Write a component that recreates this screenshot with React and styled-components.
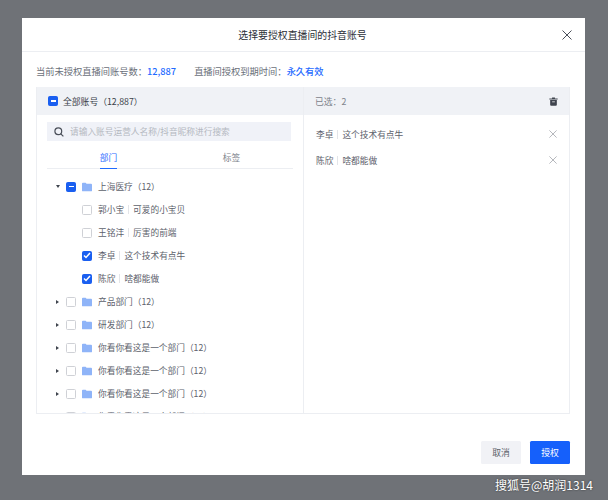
import styled, { createGlobalStyle } from "styled-components"

const FONT = `"Noto Sans CJK SC", "Inter", "Liberation Sans", sans-serif`

const departments = ["产品部门", "研发部门", "你看你看这是一个部门", "你看你看这是一个部门", "你看你看这是一个部门", "你看你看这是一个部门"]

function Folder() {
    return (
        <svg width="10" height="10" viewBox="0 0 11 10">
            <path d="M0 1.2C0 .6.4.2 1 .2h3l1 1.3h5c.6 0 1 .4 1 1V9c0 .5-.4.8-1 .8H1c-.6 0-1-.3-1-.8z" fill="#8fb4f8" />
        </svg>
    )
}

function Close({ size, color }) {
    return (
        <svg width={size} height={size} viewBox="0 0 10 10">
            <path d="M.5.5l9 9M9.5.5l-9 9" stroke={color} strokeWidth="1" fill="none" />
        </svg>
    )
}

function Check({ state }) {
    return (
        <CheckBox $on={state !== "off"}>
            {state === "half" && <Dash />}
            {state === "on" && (
                <svg width="8" height="7" viewBox="0 0 8 7">
                    <path d="M1 3.5l2 2 4-4.5" stroke="#fff" strokeWidth="1.5" fill="none" />
                </svg>
            )}
        </CheckBox>
    )
}

function Person({ name, nick, state }) {
    return (
        <PersonRow>
            <Check state={state} />
            <Name>{name}<Sep />{nick}</Name>
        </PersonRow>
    )
}

function Department({ name, open, state }) {
    return (
        <DeptRow>
            <Arrow $open={open} />
            <Check state={state} />
            <Folder />
            <Name>{name}（12）</Name>
        </DeptRow>
    )
}

export default function App() {
    return (
        <Page>
            <GlobalStyle />
            <Modal>
                <Header>
                    <Title>选择要授权直播间的抖音账号</Title>
                    <HeaderClose><Close size={10} color="#4a4f59" /></HeaderClose>
                </Header>
                <Body>
                    <Info>
                        <span>当前未授权直播间账号数：<Blue>12,887</Blue></span>
                        <span>直播间授权到期时间：<Blue>永久有效</Blue></span>
                    </Info>
                    <Panel>
                        <LeftColumn>
                            <PanelHead>
                                <Check state="half" />
                                <AllLabel>全部账号（12,887）</AllLabel>
                            </PanelHead>
                            <LeftBody>
                                <Search>
                                    <svg width="10" height="10" viewBox="0 0 10 10">
                                        <circle cx="4.3" cy="4.3" r="3.4" stroke="#4a4f59" strokeWidth="1.2" fill="none" />
                                        <path d="M6.8 6.8L9.4 9.4" stroke="#4a4f59" strokeWidth="1.2" />
                                    </svg>
                                    <span>请输入账号运营人名称/抖音昵称进行搜索</span>
                                </Search>
                                <Tabs>
                                    <Tab $active>部门</Tab>
                                    <Tab>标签</Tab>
                                </Tabs>
                                <Tree>
                                    <Department name="上海医疗" open state="half" />
                                    <Person name="郭小宝" nick="可爱的小宝贝" state="off" />
                                    <Person name="王铭沣" nick="厉害的前端" state="off" />
                                    <Person name="李卓" nick="这个技术有点牛" state="on" />
                                    <Person name="陈欣" nick="啥都能做" state="on" />
                                    {departments.map((name, i) => (
                                        <Department key={i} name={name} state="off" />
                                    ))}
                                </Tree>
                            </LeftBody>
                        </LeftColumn>
                        <RightColumn>
                            <PanelHead $split>
                                <Muted>已选：2</Muted>
                                <svg width="9" height="9" viewBox="0 0 10 10">
                                    <path d="M3.4 1.6V.6h3.2v1h3v1.1H.4V1.600zM1.300 3.400h7.400v5.200c0 .6-.4 1-1 1H2.300c-.6 0-1-.4-1-1z" fill="#3f444e" />
                                    <path d="M3.500 5h3v.8h-3z" fill="#fff" />
                                </svg>
                            </PanelHead>
                            <Selected>
                                <SelectedRow>
                                    <Name>李卓<Sep />这个技术有点牛</Name>
                                    <Close size={8} color="#a3a6ac" />
                                </SelectedRow>
                                <SelectedRow>
                                    <Name>陈欣<Sep />啥都能做</Name>
                                    <Close size={8} color="#a3a6ac" />
                                </SelectedRow>
                            </Selected>
                        </RightColumn>
                    </Panel>
                </Body>
                <Footer>
                    <Button>取消</Button>
                    <Button $primary>授权</Button>
                </Footer>
            </Modal>
            <Watermark>搜狐号@胡润1314</Watermark>
        </Page>
    )
}

const GlobalStyle = createGlobalStyle`
    * {
        box-sizing: border-box;
    }
    body {
        margin: 0;
        background: #6f7277;
        font-family: ${FONT};
    }
`
const Page = styled.div`
    position: relative;
    width: 608px;
    height: 500px;
    padding: 18px 23px 25px 22px;
    background: #6f7277;
    overflow: hidden;
`
const Modal = styled.div`
    display: flex;
    flex-direction: column;
    height: 457px;
    background: #ffffff;
`
const Header = styled.div`
    display: flex;
    align-items: center;
    justify-content: center;
    position: relative;
    height: 34px;
    flex: none;
    padding-right: 2px;
    border-bottom: 1px solid #eceef2;
`
const Title = styled.div`
    font-size: 9.900px;
    color: #2b2f38;
`
const HeaderClose = styled.div`
    position: absolute;
    right: 13px;
    top: 12px;
    display: flex;
`
const Body = styled.div`
    display: flex;
    flex-direction: column;
    flex: none;
    padding: 0 15px 0 14px;
`
const Info = styled.div`
    display: flex;
    align-items: center;
    gap: 18px;
    height: 35px;
    padding-top: 3px;
    font-size: 9.250px;
    color: #6b7079;
`
const Blue = styled.span`
    color: #1f6bff;
    font-weight: 500;
`
const Panel = styled.div`
    display: flex;
    height: 327px;
    border: 1px solid #eceef2;
    border-top: none;
    overflow: hidden;
`
const LeftColumn = styled.div`
    width: 267px;
    flex: none;
    border-right: 1px solid #eceef2;
`
const RightColumn = styled.div`
    flex: 1;
`
const PanelHead = styled.div`
    display: flex;
    align-items: center;
    justify-content: ${(p) => (p.$split ? "space-between" : "flex-start")};
    gap: 5px;
    height: 28px;
    padding: 0 11px 0 11px;
    background: #f0f2f6;
`
const AllLabel = styled.span`
    font-size: 8.800px;
    color: #3a3f49;
`
const Muted = styled.span`
    font-size: 8.800px;
    color: #7d828b;
`
const LeftBody = styled.div`
    padding: 7px 10px 0;
`
const Search = styled.div`
    display: flex;
    align-items: center;
    gap: 6px;
    height: 19px;
    margin-right: 2px;
    padding: 0 6px 0 7px;
    background: #f0f2f8;
    font-size: 8.700px;
    color: #b4b8c0;
`
const Tabs = styled.div`
    display: grid;
    grid-template-columns: 1fr 1fr;
    height: 28px;
    border-bottom: 1px solid #eceef2;
`
const Tab = styled.div`
    justify-self: center;
    height: 28px;
    padding-top: 10px;
    font-size: 8.700px;
    color: ${(p) => (p.$active ? "#1f6bff" : "#7d828b")};
    border-bottom: 1px solid ${(p) => (p.$active ? "#1f6bff" : "transparent")};
`
const Tree = styled.div`
    display: flex;
    flex-direction: column;
    padding-top: 6px;
`
const DeptRow = styled.div`
    display: flex;
    align-items: center;
    height: 23px;
    flex: none;
    padding-left: 9px;
    gap: 6px;
`
const PersonRow = styled.div`
    display: flex;
    align-items: center;
    gap: 6px;
    height: 23px;
    flex: none;
    padding-left: 35px;
`
const Arrow = styled.span`
    width: 0;
    height: 0;
    border-style: solid;
    border-width: ${(p) => (p.$open ? "3px 2px 0 2px" : "2px 0 2px 3px")};
    border-color: ${(p) => (p.$open ? "#3f444e transparent transparent transparent" : "transparent transparent transparent #3f444e")};
    margin-right: ${(p) => (p.$open ? "0" : "1px")};
`
const CheckBox = styled.span`
    display: flex;
    align-items: center;
    justify-content: center;
    width: 10px;
    height: 10px;
    flex: none;
    border-radius: 1.500px;
    background: ${(p) => (p.$on ? "#1a5ff0" : "#ffffff")};
    border: 1px solid ${(p) => (p.$on ? "#1a5ff0" : "#cfd1d6")};
`
const Dash = styled.span`
    width: 5px;
    height: 1.500px;
    background: #ffffff;
`
const Name = styled.span`
    display: flex;
    align-items: center;
    font-size: 8.700px;
    color: #5d626c;
    white-space: nowrap;
`
const Sep = styled.i`
    width: 1px;
    height: 9px;
    margin: 0 4px;
    background: #e3e5e9;
`
const Selected = styled.div`
    display: flex;
    flex-direction: column;
    padding-top: 6px;
`
const SelectedRow = styled.div`
    display: flex;
    align-items: center;
    justify-content: space-between;
    height: 26px;
    padding: 0 12px;
`
const Footer = styled.div`
    display: flex;
    justify-content: flex-end;
    gap: 9px;
    padding: 27px 15px 0;
`
const Button = styled.div`
    display: flex;
    align-items: center;
    justify-content: center;
    width: 40px;
    height: 23px;
    border-radius: 1.500px;
    font-size: 8.800px;
    color: ${(p) => (p.$primary ? "#ffffff" : "#5d626c")};
    background: ${(p) => (p.$primary ? "#1560fb" : "#f1f2f6")};
`
const Watermark = styled.div`
    position: absolute;
    left: 495px;
    top: 476px;
    font-size: 12px;
    line-height: 18px;
    color: #ffffff;
    white-space: nowrap;
    text-shadow: 0 0 2px rgba(0, 0, 0, 0.6);
`
